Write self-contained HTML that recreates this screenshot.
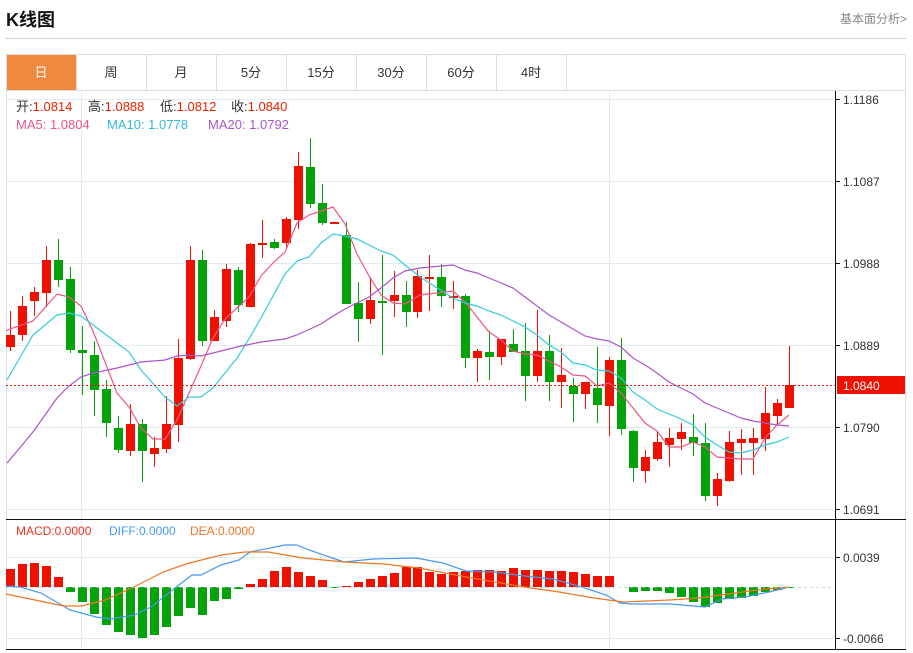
<!DOCTYPE html>
<html><head><meta charset="utf-8"><style>
body{margin:0;background:#fff;width:913px;height:653px;overflow:hidden;font-family:"Liberation Sans","Noto Sans CJK SC",sans-serif;}
.t{position:absolute;}
</style></head><body>
<div class="t" style="left:6px;top:6px;font-size:18px;font-weight:bold;color:#111;font-family:'Liberation Sans','Noto Sans CJK SC',sans-serif;">K线图</div>
<div class="t" style="right:6px;top:10px;font-size:12px;color:#888;">基本面分析&gt;</div>
<div class="t" style="left:5px;top:38px;width:901px;height:1px;background:#d0d0d0"></div>
<svg class="t" style="left:0;top:0" width="913" height="653" xmlns="http://www.w3.org/2000/svg" id="s">
<rect x="6.5" y="54.5" width="899" height="595" fill="none" stroke="#ddd"/>
<rect x="7" y="55" width="69" height="35" fill="#f0893d"/>
<g stroke="#ddd"><line x1="76.5" y1="55" x2="76.5" y2="90"/><line x1="146.5" y1="55" x2="146.5" y2="90"/><line x1="216.5" y1="55" x2="216.5" y2="90"/><line x1="286.5" y1="55" x2="286.5" y2="90"/><line x1="356.5" y1="55" x2="356.5" y2="90"/><line x1="426.5" y1="55" x2="426.5" y2="90"/><line x1="496.5" y1="55" x2="496.5" y2="90"/><line x1="566.5" y1="55" x2="566.5" y2="90"/><line x1="6" y1="90.5" x2="906" y2="90.5"/></g>
<g font-size="13" text-anchor="middle" fill="#333" font-family="Liberation Sans,Noto Sans CJK SC,sans-serif">
<text x="41" y="77" fill="#fff">日</text><text x="111" y="77">周</text><text x="181" y="77">月</text><text x="251" y="77">5分</text><text x="321" y="77">15分</text><text x="391" y="77">30分</text><text x="461" y="77">60分</text><text x="531" y="77">4时</text></g>
<g stroke="#e3eaf0"><line x1="6" y1="99.5" x2="835" y2="99.5"/><line x1="6" y1="181.5" x2="835" y2="181.5"/><line x1="6" y1="263.5" x2="835" y2="263.5"/><line x1="6" y1="345.5" x2="835" y2="345.5"/><line x1="6" y1="427.5" x2="835" y2="427.5"/><line x1="6" y1="509.5" x2="835" y2="509.5"/><line x1="81.5" y1="91" x2="81.5" y2="649"/><line x1="609.5" y1="91" x2="609.5" y2="649"/><line x1="6" y1="557.5" x2="835" y2="557.5"/><line x1="6" y1="638.5" x2="835" y2="638.5"/></g>
<g id="g"></g>
<line x1="6" y1="385.5" x2="835" y2="385.5" stroke="#ee1100" stroke-dasharray="2,2"/>
<line x1="6" y1="587.5" x2="835" y2="587.5" stroke="#9cc" stroke-dasharray="3,3" opacity=".6"/>
<g stroke="#111"><line x1="835.5" y1="91" x2="835.5" y2="650"/><line x1="6" y1="519.5" x2="906" y2="519.5"/><line x1="6" y1="649.5" x2="906" y2="649.5"/>
<line x1="835" y1="99.5" x2="840" y2="99.5"/><line x1="835" y1="181.5" x2="840" y2="181.5"/><line x1="835" y1="263.5" x2="840" y2="263.5"/><line x1="835" y1="345.5" x2="840" y2="345.5"/><line x1="835" y1="427.5" x2="840" y2="427.5"/><line x1="835" y1="509.5" x2="840" y2="509.5"/><line x1="835" y1="557.5" x2="840" y2="557.5"/><line x1="835" y1="638.5" x2="840" y2="638.5"/></g>
<rect x="837" y="376" width="68" height="18" fill="#ee1100"/>
<g font-size="12" fill="#333" font-family="Liberation Sans,sans-serif"><text x="843" y="104">1.1186</text><text x="843" y="186">1.1087</text><text x="843" y="268">1.0988</text><text x="843" y="350">1.0889</text><text x="843" y="390" fill="#fff">1.0840</text><text x="843" y="432">1.0790</text><text x="843" y="514">1.0691</text><text x="843" y="562">0.0039</text><text x="843" y="643">-0.0066</text></g>
<g font-size="13" font-family="Liberation Sans,Noto Sans CJK SC,sans-serif">
<text x="16" y="111" fill="#333">开:<tspan fill="#ee2200">1.0814</tspan></text>
<text x="88" y="111" fill="#333">高:<tspan fill="#ee2200">1.0888</tspan></text>
<text x="160" y="111" fill="#333">低:<tspan fill="#ee2200">1.0812</tspan></text>
<text x="231" y="111" fill="#333">收:<tspan fill="#ee2200">1.0840</tspan></text>
<text x="16" y="129" fill="#ee5588">MA5: 1.0804</text>
<text x="107" y="129" fill="#33bbdd">MA10: 1.0778</text>
<text x="208" y="129" fill="#aa55cc">MA20: 1.0792</text></g>
<g font-size="12" font-family="Liberation Sans,sans-serif">
<text x="16" y="535" fill="#ee3322">MACD:0.0000</text>
<text x="109" y="535" fill="#4499ee">DIFF:0.0000</text>
<text x="190" y="535" fill="#ee7722">DEA:0.0000</text></g>
</svg>
<script>
var R="#ee1100",G="#05a30a";
var c=[[335,347,311,351,R],[306,335,296,341,R],[292,301,287,316,R],[260,293,246,307,R],[260,280,239,287,G],[279,350,267,353,G],[350,353,326,395,G],[355,390,341,416,G],[389,423,380,437,G],[428,450,416,453,G],[424,451,404,456,R],[424,451,419,482,G],[448,454,437,467,R],[424,449,396,453,R],[358,425,339,442,R],[260,359,246,360,R],[260,341,250,346,G],[317,341,310,341,R],[269,321,264,327,R],[270,305,267,312,G],[244,307,243,307,R],[243,245,220,258,R],[242,248,239,249,G],[219,243,217,249,R],[166,220,152,229,R],[167,204,138,208,G],[203,223,184,225,G],[222,224,222,224,R],[235,304,222,304,G],[303,319,282,342,G],[300,319,277,324,R],[301,303,255,355,G],[295,301,271,317,R],[295,312,281,327,G],[276,312,270,318,R],[277,278,255,311,R],[277,296,264,307,G],[296,298,281,309,R],[296,358,294,368,G],[351,358,349,382,R],[352,357,331,380,G],[339,357,339,365,R],[344,352,329,352,G],[351,376,323,401,G],[351,376,310,382,R],[351,382,335,401,G],[375,382,348,408,R],[386,394,378,422,G],[382,394,382,409,R],[388,405,347,423,G],[360,406,357,436,R],[360,429,338,435,G],[431,468,430,482,G],[457,471,450,483,R],[442,459,431,461,R],[438,445,428,467,R],[432,439,423,450,R],[437,443,414,456,G],[443,496,423,501,G],[479,496,473,506,R],[442,481,431,482,R],[439,443,429,475,R],[438,443,428,475,R],[413,439,387,451,R],[403,416,399,425,R],[385,408,346,408,R]];
var m=[569,564,563,566,577,-592,-602,-614,-625,-632,-635,-638,-635,-627,-616,-608,-615,-601,-599,-589,584,579,571,567,572,576,580,-588,586,582,579,576,573,567,567,572,574,572,571,570,570,571,568,570,570,571,571,572,574,576,576,0,-592,-591,-591,-593,-597,-602,-607,-603,-599,-598,-596,-592,-590,-588];
var s="",X=function(i){return Math.round(10+i*11.985)};
m.forEach(function(v,i){if(!v)return;var x=X(i),g=v<0;v=Math.abs(v);var t=Math.min(v,587),h=Math.abs(v-587)||1;s+='<rect x="'+(x-4)+'" y="'+(g?587:t)+'" width="9" height="'+h+'" fill="'+(g?G:R)+'"/>';});
c.forEach(function(a,i){var x=X(i);s+='<line x1="'+(x+.5)+'" y1="'+a[2]+'" x2="'+(x+.5)+'" y2="'+a[3]+'" stroke="'+a[4]+'"/><rect x="'+(x-4)+'" y="'+a[0]+'" width="9" height="'+Math.max(2,a[1]-a[0])+'" fill="'+a[4]+'"/>';});
function pl(p,col){s+='<polyline fill="none" stroke="'+col+'" stroke-width="1.2" points="'+p+'"/>';}
pl("6,331 10,329 33,321 57,294 69,297 81,306 93,331 117,393 129,407 141,428 153,439 165,439 177,420 189,393 201,366 213,338 225,319 237,308 249,297 261,276 273,263 285,252 297,223 309,215 321,211 333,207 345,224 357,254 369,276 381,295 393,303 405,304 420,295 453,291 465,302 489,332 501,340 513,351 525,354 537,355 549,361 561,367 573,375 585,376 597,386 609,383 621,393 633,408 645,423 657,431 669,447 681,447 693,442 705,447 717,457 729,458 741,459 753,459 765,438 777,425 789,415","#ee5588");
pl("7,380 33,335 57,315 69,313 81,316 93,325 129,352 141,370 165,397 177,406 189,397 201,397 213,388 237,358 249,339 261,318 285,274 297,261 309,257 321,243 333,234 345,236 357,239 369,245 381,251 393,255 405,265 420,277 453,298 465,303 477,306 489,311 501,315 513,321 525,327 537,335 549,345 561,352 573,363 585,365 597,370 609,371 621,378 633,392 645,400 657,409 669,414 681,419 693,425 705,437 717,445 729,452 741,453 753,450 765,445 777,442 789,437","#33ccdd");
pl("7,463 33,432 57,398 69,386 81,377 93,373 117,368 129,365 141,362 153,361 165,360 177,356 189,355 201,356 213,353 237,347 261,342 285,339 297,335 321,324 333,316 345,309 357,303 369,297 381,288 393,278 405,271 420,268 441,266 453,265 465,270 477,273 489,278 501,283 513,288 525,297 537,306 549,315 561,322 573,329 585,336 597,339 609,341 621,347 633,358 645,365 657,373 669,382 681,388 693,394 705,403 717,408 729,413 741,418 753,421 765,423 777,425 789,426","#aa55cc");
pl("6,586 20,587 41,593 70,610 96,617 111,619 134,615 151,607 175,588 192,575 201,575 221,565 239,560 250,552 285,545 297,545 309,550 344,562 373,559 416,558 443,563 466,571 495,572 524,576 553,579 582,587 606,595 620,603 632,604 670,604 705,607 722,599 745,597 769,592 789,587","#4499ee");
pl("6,594 35,600 64,606 82,606 105,600 134,587 163,572 186,564 221,555 245,552 268,552 303,558 344,562 384,564 419,568 466,577 524,587 559,592 594,598 623,602 670,600 699,598 728,594 757,590 789,587","#ee7722");
document.getElementById("g").innerHTML=s;
</script>
</body></html>
